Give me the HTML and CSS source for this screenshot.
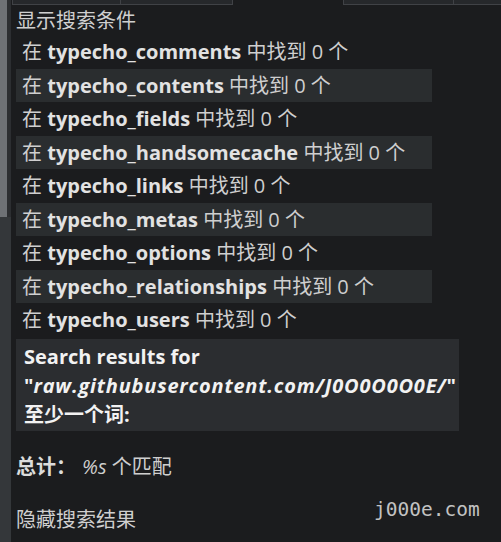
FILE: index.html
```html
<!DOCTYPE html>
<html lang="zh">
<head>
<meta charset="utf-8">
<link rel="stylesheet" href="styles.css">
</head>
<body>
<div class="page">
  <div class="scrollbar">
    <div class="thumb"></div>
    <div class="track"></div>
  </div>
  <div class="main">
    <div class="top-row">
      <div class="cell c1"></div>
      <div class="cell c2"></div>
      <div class="spacer"></div>
      <div class="cell c3"></div>
      <div class="cell c4"></div>
    </div>
    <div class="title">显示搜索条件</div>
    <ul class="results">
      <li class="row">在 <b>typecho_comments</b> 中找到 0 个</li>
      <li class="row alt">在 <b>typecho_contents</b> 中找到 0 个</li>
      <li class="row">在 <b>typecho_fields</b> 中找到 0 个</li>
      <li class="row alt">在 <b>typecho_handsomecache</b> 中找到 0 个</li>
      <li class="row">在 <b>typecho_links</b> 中找到 0 个</li>
      <li class="row alt">在 <b>typecho_metas</b> 中找到 0 个</li>
      <li class="row">在 <b>typecho_options</b> 中找到 0 个</li>
      <li class="row alt">在 <b>typecho_relationships</b> 中找到 0 个</li>
      <li class="row">在 <b>typecho_users</b> 中找到 0 个</li>
    </ul>
    <div class="search-box">
      <div>Search results for</div>
      <div>"<i>raw.githubusercontent.com/J0O0O0O0E/</i>"</div>
      <div>至少一个词:</div>
    </div>
    <div class="total"><b>总计：</b><i>%s</i> 个匹配</div>
    <div class="hide">隐藏搜索结果</div>
  </div>
</div>
<div class="watermark">j000e.com</div>
</body>
</html>
```
FILE: styles.css
```css
html, body {
  margin: 0;
  padding: 0;
}
body {
  width: 501px;
  height: 542px;
  overflow: hidden;
  background: #1b1c1e;
  color: #cfcfcf;
  font-family: "Open Sans", "Noto Sans CJK SC", sans-serif;
  font-size: 20px;
  position: relative;
}
.page {
  display: flex;
  height: 542px;
}
.scrollbar {
  width: 11px;
  display: flex;
  flex-direction: column;
  flex-shrink: 0;
}
.thumb {
  height: 217px;
  background: #6e7175;
  border-right: 4px solid #2c2e31;
}
.track {
  flex: 1;
  background: #34373a;
}
.main {
  flex: 1;
  padding-left: 5px;
  min-width: 0;
}
.top-row {
  display: flex;
  height: 5px;
  margin-left: -4px;
}
.cell {
  background: #26282b;
  border: 1px solid #404246;
  border-top: none;
  box-sizing: border-box;
}
.c1 { width: 109px; }
.c2 { width: 112px; border-left: none; }
.spacer { width: 110px; }
.c3 { width: 111px; }
.c4 { flex: 1; border-left: none; border-right: none; }
.title {
  height: 30px;
  line-height: 32px;
  color: #cfcfcf;
}
.results {
  list-style: none;
  margin: 0;
  padding: 0;
  width: 416px;
}
.row {
  height: 33.5px;
  line-height: 33.5px;
  padding-left: 6px;
  white-space: nowrap;
}
.row b {
  color: #e2e2e2;
  font-weight: 700;
}
.row.alt {
  background: #2a2d2f;
}
.search-box {
  margin-top: 2px;
  width: 443px;
  height: 92px;
  box-sizing: border-box;
  background: #2b2d30;
  padding: 3px 8px;
  color: #f2f2f2;
  font-weight: 700;
  line-height: 29px;
  white-space: nowrap;
}
.search-box i {
  font-style: italic;
  letter-spacing: 0.8px;
}
.total {
  margin-top: 22px;
  line-height: 28px;
}
.total b {
  color: #dcdcdc;
}
.total i {
  margin-left: 6px;
}
.hide {
  margin-top: 25px;
  line-height: 28px;
}
.watermark {
  position: absolute;
  left: 374px;
  top: 497px;
  font-family: "DejaVu Sans Mono", monospace;
  font-size: 19.5px;
  color: #c2c2c2;
  line-height: 26px;
}
```
